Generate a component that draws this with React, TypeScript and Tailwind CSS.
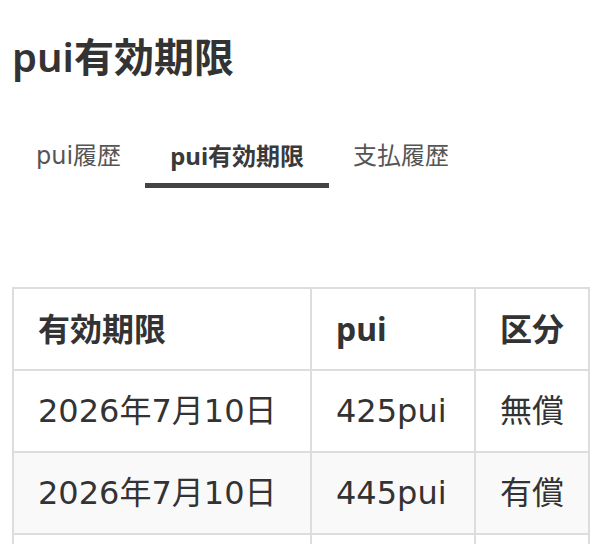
import React from "react";

const rows = [
  { date: "2026年7月10日", amount: "425pui", kind: "無償" },
  { date: "2026年7月10日", amount: "445pui", kind: "有償" },
  { date: "2026年8月1日", amount: "300pui", kind: "無償" },
];

const tabs = [
  { label: "pui履歴", active: false },
  { label: "pui有効期限", active: true },
  { label: "支払履歴", active: false },
];

const bodyFont = { fontFamily: '"DejaVu Sans", "Noto Sans CJK JP", sans-serif' };

export default function App() {
  return (
    <div
      className="min-h-screen bg-white px-3 text-[#333]"
      style={{ fontFamily: '"Noto Sans", "Noto Sans CJK JP", sans-serif' }}
    >
      <h1 className="pt-[27px] text-[40px] font-semibold leading-[60px]">pui有効期限</h1>

      <nav className="mt-[42px] flex">
        {tabs.map((t) => (
          <div
            key={t.label}
            style={t.active ? undefined : bodyFont}
            className={
              t.active
                ? "border-b-[5px] border-[#444] px-[25px] pt-[9px] pb-[9px] text-[24px] font-bold leading-[36px] text-[#3a3a3a]"
                : "border-b-[5px] border-transparent px-[24px] pt-[9px] pb-[9px] text-[24px] leading-[36px] text-[#555]"
            }
          >
            {t.label}
          </div>
        ))}
      </nav>

      <table className="mt-[99px] w-[576px] table-fixed border-collapse border-2 border-[#ddd] text-[32px] leading-[48px]">
        <colgroup>
          <col className="w-[298px]" />
          <col className="w-[164px]" />
          <col className="w-[114px]" />
        </colgroup>
        <thead>
          <tr className="bg-white">
            <th className="border-2 border-[#ddd] px-[24px] py-4 text-left font-bold">有効期限</th>
            <th className="border-2 border-[#ddd] px-[24px] py-4 text-left font-bold">pui</th>
            <th className="border-2 border-[#ddd] px-[24px] py-4 text-left font-bold">区分</th>
          </tr>
        </thead>
        <tbody style={bodyFont}>
          {rows.map((r, i) => (
            <tr key={i} className={i % 2 === 1 ? "bg-[#f9f9f9]" : "bg-white"}>
              <td className="border-2 border-[#ddd] px-[24px] py-4 whitespace-nowrap">{r.date}</td>
              <td className="border-2 border-[#ddd] px-[24px] py-4 whitespace-nowrap">{r.amount}</td>
              <td className="border-2 border-[#ddd] px-[24px] py-4 whitespace-nowrap">{r.kind}</td>
            </tr>
          ))}
        </tbody>
      </table>
    </div>
  );
}
